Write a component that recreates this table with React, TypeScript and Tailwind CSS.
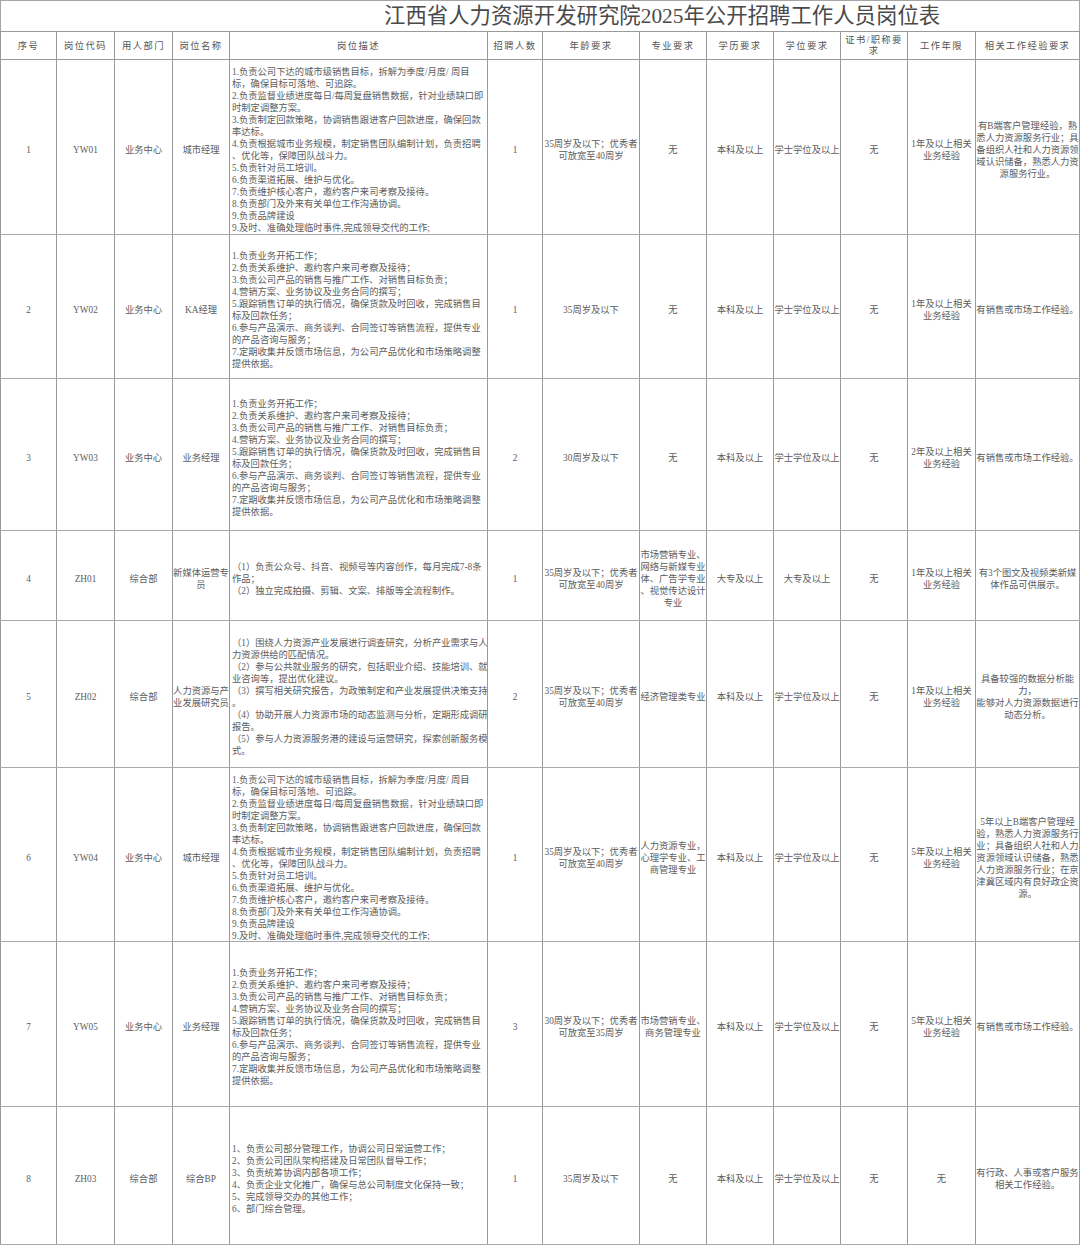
import clsx from 'clsx';

type Row = {
  h: string;
  no: string;
  code: string;
  dept: string;
  name: string[];
  desc: string[];
  count: string;
  age: string[];
  major: string[];
  edu: string;
  degree: string;
  cert: string;
  years: string[];
  exp: string[];
};

const cols =
  'grid grid-cols-[57px_58px_58px_57px_258px_55px_97px_67px_67px_67px_67px_68px_104px]';

const descCity = [
  '1.负责公司下达的城市级销售目标，拆解为季度/月度/ 周目',
  '标，确保目标可落地、可追踪。',
  '2.负责监督业绩进度每日/每周复盘销售数据，针对业绩缺口即',
  '时制定调整方案。',
  '3.负责制定回款策略，协调销售跟进客户回款进度，确保回款',
  '率达标。',
  '4.负责根据城市业务规模，制定销售团队编制计划，负责招聘',
  '、优化等，保障团队战斗力。',
  '5.负责针对员工培训。',
  '6.负责渠道拓展、维护与优化。',
  '7.负责维护核心客户，邀约客户来司考察及接待。',
  '8.负责部门及外来有关单位工作沟通协调。',
  '9.负责品牌建设',
  '9.及时、准确处理临时事件,完成领导交代的工作;',
];

const descSales = [
  '1.负责业务开拓工作；',
  '2.负责关系维护、邀约客户来司考察及接待；',
  '3.负责公司产品的销售与推广工作、对销售目标负责；',
  '4.营销方案、业务协议及业务合同的撰写；',
  '5.跟踪销售订单的执行情况，确保货款及时回收，完成销售目',
  '标及回款任务；',
  '6.参与产品演示、商务谈判、合同签订等销售流程，提供专业',
  '的产品咨询与服务；',
  '7.定期收集并反馈市场信息，为公司产品优化和市场策略调整',
  '提供依据。',
];

const rows: Row[] = [
  {
    h: 'h-[175px]',
    no: '1',
    code: 'YW01',
    dept: '业务中心',
    name: ['城市经理'],
    desc: descCity,
    count: '1',
    age: ['35周岁及以下；优秀者', '可放宽至40周岁'],
    major: ['无'],
    edu: '本科及以上',
    degree: '学士学位及以上',
    cert: '无',
    years: ['1年及以上相关', '业务经验'],
    exp: [
      '有B端客户管理经验，熟',
      '悉人力资源服务行业；具',
      '备组织人社和人力资源领',
      '域认识储备，熟悉人力资',
      '源服务行业。',
    ],
  },
  {
    h: 'h-[144px]',
    no: '2',
    code: 'YW02',
    dept: '业务中心',
    name: ['KA经理'],
    desc: descSales,
    count: '1',
    age: ['35周岁及以下'],
    major: ['无'],
    edu: '本科及以上',
    degree: '学士学位及以上',
    cert: '无',
    years: ['1年及以上相关', '业务经验'],
    exp: ['有销售或市场工作经验。'],
  },
  {
    h: 'h-[152px]',
    no: '3',
    code: 'YW03',
    dept: '业务中心',
    name: ['业务经理'],
    desc: descSales,
    count: '2',
    age: ['30周岁及以下'],
    major: ['无'],
    edu: '本科及以上',
    degree: '学士学位及以上',
    cert: '无',
    years: ['2年及以上相关', '业务经验'],
    exp: ['有销售或市场工作经验。'],
  },
  {
    h: 'h-[90px]',
    no: '4',
    code: 'ZH01',
    dept: '综合部',
    name: ['新媒体运营专', '员'],
    desc: [
      '（1）负责公众号、抖音、视频号等内容创作，每月完成7-8条',
      '作品；',
      '（2）独立完成拍摄、剪辑、文案、排版等全流程制作。',
    ],
    count: '1',
    age: ['35周岁及以下；优秀者', '可放宽至40周岁'],
    major: ['市场营销专业、', '网络与新媒专业', '体、广告学专业', '、视觉传达设计', '专业'],
    edu: '大专及以上',
    degree: '大专及以上',
    cert: '无',
    years: ['1年及以上相关', '业务经验'],
    exp: ['有3个图文及视频类新媒', '体作品可供展示。'],
  },
  {
    h: 'h-[147px]',
    no: '5',
    code: 'ZH02',
    dept: '综合部',
    name: ['人力资源与产', '业发展研究员'],
    desc: [
      '（1）围绕人力资源产业发展进行调查研究，分析产业需求与人',
      '力资源供给的匹配情况。',
      '（2）参与公共就业服务的研究，包括职业介绍、技能培训、就',
      '业咨询等，提出优化建议。',
      '（3）撰写相关研究报告，为政策制定和产业发展提供决策支持',
      '。',
      '（4）协助开展人力资源市场的动态监测与分析，定期形成调研',
      '报告。',
      '（5）参与人力资源服务港的建设与运营研究，探索创新服务模',
      '式。',
    ],
    count: '2',
    age: ['35周岁及以下；优秀者', '可放宽至40周岁'],
    major: ['经济管理类专业'],
    edu: '本科及以上',
    degree: '学士学位及以上',
    cert: '无',
    years: ['1年及以上相关', '业务经验'],
    exp: ['具备较强的数据分析能', '力，', '能够对人力资源数据进行', '动态分析。'],
  },
  {
    h: 'h-[174px]',
    no: '6',
    code: 'YW04',
    dept: '业务中心',
    name: ['城市经理'],
    desc: descCity,
    count: '1',
    age: ['35周岁及以下；优秀者', '可放宽至40周岁'],
    major: ['人力资源专业，', '心理学专业、工', '商管理专业'],
    edu: '本科及以上',
    degree: '学士学位及以上',
    cert: '无',
    years: ['5年及以上相关', '业务经验'],
    exp: [
      '5年以上B端客户管理经',
      '验，熟悉人力资源服务行',
      '业；具备组织人社和人力',
      '资源领域认识储备，熟悉',
      '人力资源服务行业；在京',
      '津冀区域内有良好政企资',
      '源。',
    ],
  },
  {
    h: 'h-[165px]',
    no: '7',
    code: 'YW05',
    dept: '业务中心',
    name: ['业务经理'],
    desc: descSales,
    count: '3',
    age: ['30周岁及以下；优秀者', '可放宽至35周岁'],
    major: ['市场营销专业、', '商务管理专业'],
    edu: '本科及以上',
    degree: '学士学位及以上',
    cert: '无',
    years: ['5年及以上相关', '业务经验'],
    exp: ['有销售或市场工作经验。'],
  },
  {
    h: 'h-[138px]',
    no: '8',
    code: 'ZH03',
    dept: '综合部',
    name: ['综合BP'],
    desc: [
      '1、负责公司部分管理工作，协调公司日常运营工作；',
      '2、负责公司团队架构搭建及日常团队督导工作；',
      '3、负责统筹协调内部各项工作；',
      '4、负责企业文化推广，确保与总公司制度文化保持一致；',
      '5、完成领导交办的其他工作；',
      '6、部门综合管理。',
    ],
    count: '1',
    age: ['35周岁及以下'],
    major: ['无'],
    edu: '本科及以上',
    degree: '学士学位及以上',
    cert: '无',
    years: ['无'],
    exp: ['有行政、人事或客户服务', '相关工作经验。'],
  },
];

const headers: string[][] = [
  ['序号'],
  ['岗位代码'],
  ['用人部门'],
  ['岗位名称'],
  ['岗位描述'],
  ['招聘人数'],
  ['年龄要求'],
  ['专业要求'],
  ['学历要求'],
  ['学位要求'],
  ['证书/职称要', '求'],
  ['工作年限'],
  ['相关工作经验要求'],
];

function Cell({
  lines,
  first,
  left,
  className,
}: {
  lines: string[];
  first?: boolean;
  left?: boolean;
  className?: string;
}) {
  return (
    <div
      className={clsx(
        'flex items-center overflow-hidden border-r border-[#9a9a9a]',
        first && 'border-l',
        left ? 'justify-start pl-[2px] text-left' : 'justify-center text-center',
        className,
      )}
    >
      <div>
        {lines.map((line, i) => (
          <div key={i} className="whitespace-nowrap">
            {line}
          </div>
        ))}
      </div>
    </div>
  );
}

export default function App() {
  return (
    <div className="w-[1080px] bg-white font-['Liberation_Serif','Noto_Sans_CJK_SC',serif] text-[#5c5c5c]">
      <div className="flex h-[31px] items-center border border-b-0 border-[#a6a6a6] pl-[383px] pt-[2px] text-[21.4px] leading-none text-[#4a4a4a]">
        江西省人力资源开发研究院2025年公开招聘工作人员岗位表
      </div>

      <div
        className={clsx(
          cols,
          'h-[29px] border-y border-[#9a9a9a] text-[9.3px] leading-[11px] tracking-[1.4px] text-[#555]',
        )}
      >
        {headers.map((h, i) => (
          <Cell key={i} lines={h} first={i === 0} className="pt-[1px]" />
        ))}
      </div>

      {rows.map((row) => (
        <div
          key={row.no}
          className={clsx(
            cols,
            row.h,
            'border-b border-[#a8a8a8] text-[9.3px] leading-[12px]',
          )}
        >
          <Cell lines={[row.no]} first className="pt-[6px]" />
          <Cell lines={[row.code]} className="pt-[6px]" />
          <Cell lines={[row.dept]} className="pt-[6px]" />
          <Cell lines={row.name} className="pt-[6px]" />
          <Cell lines={row.desc} left className="pt-[6px]" />
          <Cell lines={[row.count]} className="pt-[6px]" />
          <Cell lines={row.age} className="pt-[6px]" />
          <Cell lines={row.major} className="pt-[6px]" />
          <Cell lines={[row.edu]} className="pt-[6px]" />
          <Cell lines={[row.degree]} className="pt-[6px]" />
          <Cell lines={[row.cert]} className="pt-[6px]" />
          <Cell lines={row.years} className="pt-[6px]" />
          <Cell lines={row.exp} className="pt-[6px]" />
        </div>
      ))}
    </div>
  );
}
